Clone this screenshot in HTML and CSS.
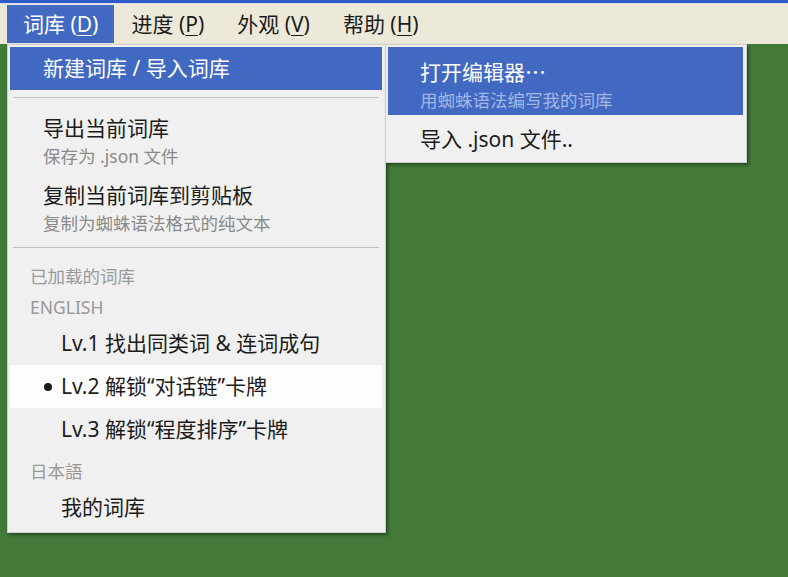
FILE: index.html
```html
<!DOCTYPE html>
<html lang="zh-CN">
<head>
<meta charset="utf-8">
<title>词库菜单</title>
<link rel="stylesheet" href="styles.css">
</head>
<body>
<div class="menubar">
  <div class="bar-item active">词库 (<u>D</u>)</div>
  <div class="bar-item">进度 (<u>P</u>)</div>
  <div class="bar-item">外观 (<u>V</u>)</div>
  <div class="bar-item">帮助 (<u>H</u>)</div>
</div>

<div class="menu main-menu">
  <div class="item single selected">新建词库 / 导入词库</div>
  <div class="sep"></div>
  <div class="item double">
    <div class="title">导出当前词库</div>
    <div class="sub">保存为 .json 文件</div>
  </div>
  <div class="item double">
    <div class="title">复制当前词库到剪贴板</div>
    <div class="sub">复制为蜘蛛语法格式的纯文本</div>
  </div>
  <div class="sep sep-2"></div>
  <div class="label">已加载的词库</div>
  <div class="lang">ENGLISH</div>
  <div class="lv">Lv.1 找出同类词 &amp; 连词成句</div>
  <div class="lv current"><span class="dot"></span>Lv.2 解锁“对话链”卡牌</div>
  <div class="lv">Lv.3 解锁“程度排序”卡牌</div>
  <div class="lang">日本語</div>
  <div class="lv">我的词库</div>
</div>

<div class="menu sub-menu">
  <div class="item double selected">
    <div class="title">打开编辑器<span class="cjk">…</span></div>
    <div class="sub">用蜘蛛语法编写我的词库</div>
  </div>
  <div class="item plain">导入 .json 文件..</div>
</div>
</body>
</html>
```

FILE: styles.css
```css
* { box-sizing: border-box; }

html, body {
  margin: 0;
  padding: 0;
}

body {
  width: 788px;
  height: 577px;
  background: #437a3a;
  font-family: "Noto Sans", "Noto Sans CJK SC", sans-serif;
  color: #1c1c1c;
  position: relative;
  overflow: hidden;
}

.menubar {
  display: flex;
  height: 44px;
  padding: 2px 0 1px 7px;
  background: #ece9d8;
  border-top: 3px solid #2e5cc6;
  box-shadow: inset 0 1px 0 #dcdcf0;
}

.bar-item {
  display: flex;
  align-items: center;
  padding: 0 16px;
  margin-right: 1px;
  font-size: 21px;
  line-height: 1;
  color: #1c1c1c;
}

.bar-item u {
  text-decoration-thickness: 1px;
  text-underline-offset: 3px;
}

.bar-item.active {
  background: #4169c1;
  color: #fff;
}

.menu {
  position: absolute;
  background: #f0f0f0;
  border: 1px solid #cfcfcf;
  box-shadow: 2px 2px 3px rgba(0, 0, 0, 0.4);
}

.main-menu {
  left: 7px;
  top: 44px;
  width: 379px;
  padding: 2px 3px 3px 2px;
}

.sub-menu {
  left: 385px;
  top: 44px;
  width: 362px;
  padding: 2px 3px 2px 2px;
}

.item {
  padding-left: 33px;
  font-size: 21px;
}

.item.single {
  height: 43px;
  line-height: 43px;
}

.item.double {
  height: 67px;
  padding-top: 11px;
}

.sub-menu .item {
  padding-left: 32px;
}

.sub-menu .item.double {
  height: 68px;
}

.item .title {
  line-height: 26px;
}

.item .sub {
  margin-top: 5px;
  font-size: 17.5px;
  line-height: 20px;
  color: #8a8a8a;
}

.item.selected {
  background: #4169c1;
  color: #fff;
}

.item.selected .sub {
  color: #a3b6e6;
}

.item.plain {
  height: 45px;
  padding-top: 4px;
  line-height: 41px;
}

.cjk {
  font-family: "Noto Sans CJK SC", sans-serif;
}

.sep {
  height: 1px;
  margin: 7px 3px 6px 3px;
  background: #c3c3c3;
}

.sep.sep-2 {
  margin: 9px 3px 17px 3px;
}

.label {
  padding-left: 20px;
  font-size: 17.5px;
  line-height: 22px;
  color: #999;
}

.lang {
  margin-top: 5px;
  padding-left: 20px;
  font-size: 17.5px;
  line-height: 30px;
  color: #999;
}

.lv {
  position: relative;
  height: 43px;
  line-height: 43px;
  padding-left: 51px;
  font-size: 21px;
}

.lv.current {
  background: #fdfdfd;
}

.dot {
  position: absolute;
  left: 34px;
  top: 18px;
  width: 8px;
  height: 8px;
  border-radius: 50%;
  background: #1c1c1c;
}
```
